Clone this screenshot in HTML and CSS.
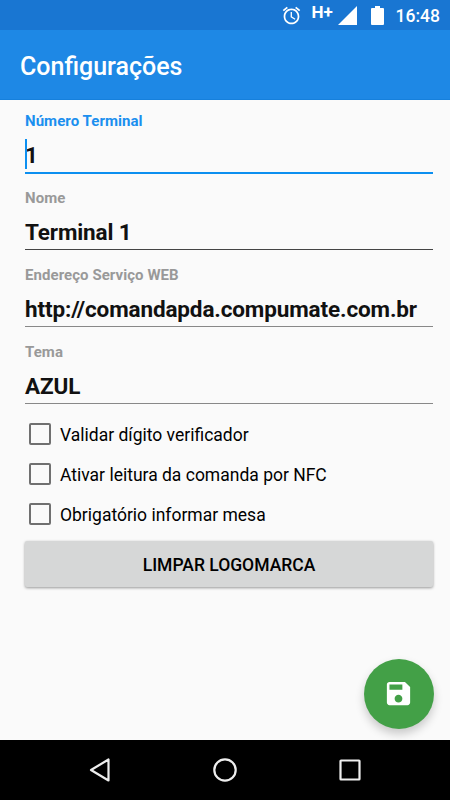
FILE: index.html
```html
<!DOCTYPE html>
<html lang="pt-BR">
<head>
<meta charset="utf-8">
<title>Configurações</title>
<link rel="stylesheet" href="styles.css">
</head>
<body>
<div class="screen">
  <div class="status">
    <svg class="alarm" viewBox="0 0 24 24"><path fill="#fff" d="M22 5.72l-4.6-3.86-1.29 1.53 4.6 3.86L22 5.72zM7.88 3.39L6.6 1.86 2 5.71l1.29 1.53 4.59-3.85zM12.500 8H11v6l4.750 2.850.750-1.230-4-2.370V8zM12 4c-4.970 0-9 4.030-9 9s4.020 9 9 9c4.970 0 9-4.030 9-9s-4.030-9-9-9zm0 16c-3.870 0-7-3.130-7-7s3.130-7 7-7 7 3.130 7 7-3.130 7-7 7z"/></svg>
    <span class="network">H+</span>
    <svg class="signal" viewBox="0 0 19 19"><path fill="#fff" d="M0 19L19 0V19Z"/></svg>
    <svg class="battery" viewBox="0 0 13 19"><path fill="#fff" d="M4 0h5v2h3q1 0 1 1v15q0 1-1 1H1q-1 0-1-1V3q0-1 1-1h3z"/></svg>
    <span class="clock">16:48</span>
  </div>
  <header class="appbar"><h1 class="title">Configurações</h1></header>
  <main class="content">
    <div class="field active"><div class="label">Número Terminal</div><div class="value"><span class="caret"></span>1</div></div>
    <div class="field"><div class="label">Nome</div><div class="value">Terminal 1</div></div>
    <div class="field"><div class="label">Endereço Serviço WEB</div><div class="value">http://comandapda.compumate.com.br</div></div>
    <div class="field"><div class="label">Tema</div><div class="value">AZUL</div></div>
    <div class="checks">
      <div class="check"><span class="box"></span><span class="text">Validar dígito verificador</span></div>
      <div class="check"><span class="box"></span><span class="text">Ativar leitura da comanda por NFC</span></div>
      <div class="check"><span class="box"></span><span class="text">Obrigatório informar mesa</span></div>
    </div>
    <button class="clear">LIMPAR LOGOMARCA</button>
    <button class="fab" aria-label="Salvar"><svg class="save" viewBox="0 0 24 24"><path fill="#fff" d="M17 3H5c-1.11 0-2 .9-2 2v14c0 1.1.89 2 2 2h14c1.1 0 2-.9 2-2V7l-4-4zm-5 16c-1.66 0-3-1.34-3-3s1.34-3 3-3 3 1.34 3 3-1.34 3-3 3zm3-10H5V5h10v4z"/></svg></button>
  </main>
  <nav class="navbar">
    <svg class="navicon" viewBox="0 0 30 30"><path d="M6 15L23.500 4.500V25.500Z"/></svg>
    <svg class="navicon" viewBox="0 0 30 30"><circle cx="15" cy="15" r="10.700"/></svg>
    <svg class="navicon" viewBox="0 0 30 30"><rect x="5.500" y="5.500" width="19" height="19" rx=".5"/></svg>
  </nav>
</div>
</body>
</html>
```
FILE: styles.css
```css
* { box-sizing: border-box; }
body { margin: 0; font-family: Roboto, sans-serif; color: #000; }
.screen { width: 450px; height: 800px; display: flex; flex-direction: column; background: #fafafa; overflow: hidden; }
.status { height: 30px; background: #1976d2; color: #fff; display: flex; align-items: center; justify-content: flex-end; padding-right: 10px; }
.alarm { width: 21px; height: 21px; margin-right: 10px; }
.network { width: 22px; font-size: 17px; font-weight: 700; line-height: 16px; margin: 0 4px 6px 0; white-space: nowrap; }
.signal { width: 19px; height: 19px; margin-right: 14px; }
.battery { width: 13px; height: 19px; margin-right: 12px; }
.clock { font-size: 17.5px; font-weight: 500; line-height: 30px; padding-top: 2px; }
.appbar { height: 70px; padding: 4px 20px 0; background: #1e88e5; border-bottom: 1px solid #1680dc; display: flex; align-items: center; }
.title { margin: 0; font-size: 25px; font-weight: 500; color: #fff; }
.content { position: relative; height: 640px; padding: 0 17px 0 25px; }
.field { height: 77px; padding-top: 16px; border-bottom: 1px solid #888; }
.field:first-child { height: 74px; padding-top: 12px; }
.field:nth-child(2) { height: 76px; padding-top: 15px; border-bottom-color: #444; }
.label { font-size: 15px; line-height: 18px; letter-spacing: .06px; font-weight: 700; color: #999; }
.value { position: relative; height: 42px; font-size: 22.5px; line-height: 50px; letter-spacing: -.13px; font-weight: 700; white-space: nowrap; color: #111; }
.field.active { border-bottom: 2px solid #0c8ff0; }
.active .label { color: #1b8fef; }
.caret { position: absolute; left: 0; top: 9px; width: 2px; height: 30px; background: #0c8ff0; }
.checks { padding-top: 10px; }
.check { height: 40px; display: flex; align-items: center; padding-left: 4px; }
.box { width: 22px; height: 22px; border: 2px solid #707070; border-radius: 2px; margin-right: 9px; }
.text { font-size: 17.5px; line-height: 24px; padding-top: 1px; }
.clear { display: block; width: 408px; height: 46px; margin-top: 7px; padding: 1px 0 0; border: 0; border-radius: 2px; background: #d6d7d7; box-shadow: 0 1px 3px rgba(0,0,0,.4); font: 500 17.5px/24px Roboto, sans-serif; color: #000; }
.fab { position: absolute; left: 364px; top: 558.5px; width: 70px; height: 70px; padding: 0; border: 0; border-radius: 50%; background: #43a047; display: flex; align-items: center; justify-content: center; box-shadow: 0 5px 10px rgba(0,0,0,.2); }
.save { width: 31px; height: 31px; margin-right: 1px; }
.navbar { height: 60px; background: #000; display: flex; justify-content: space-between; align-items: center; padding: 0 85px; }
.navicon { width: 30px; height: 30px; fill: none; stroke: #eee; stroke-width: 2.2; stroke-linejoin: round; }
```
